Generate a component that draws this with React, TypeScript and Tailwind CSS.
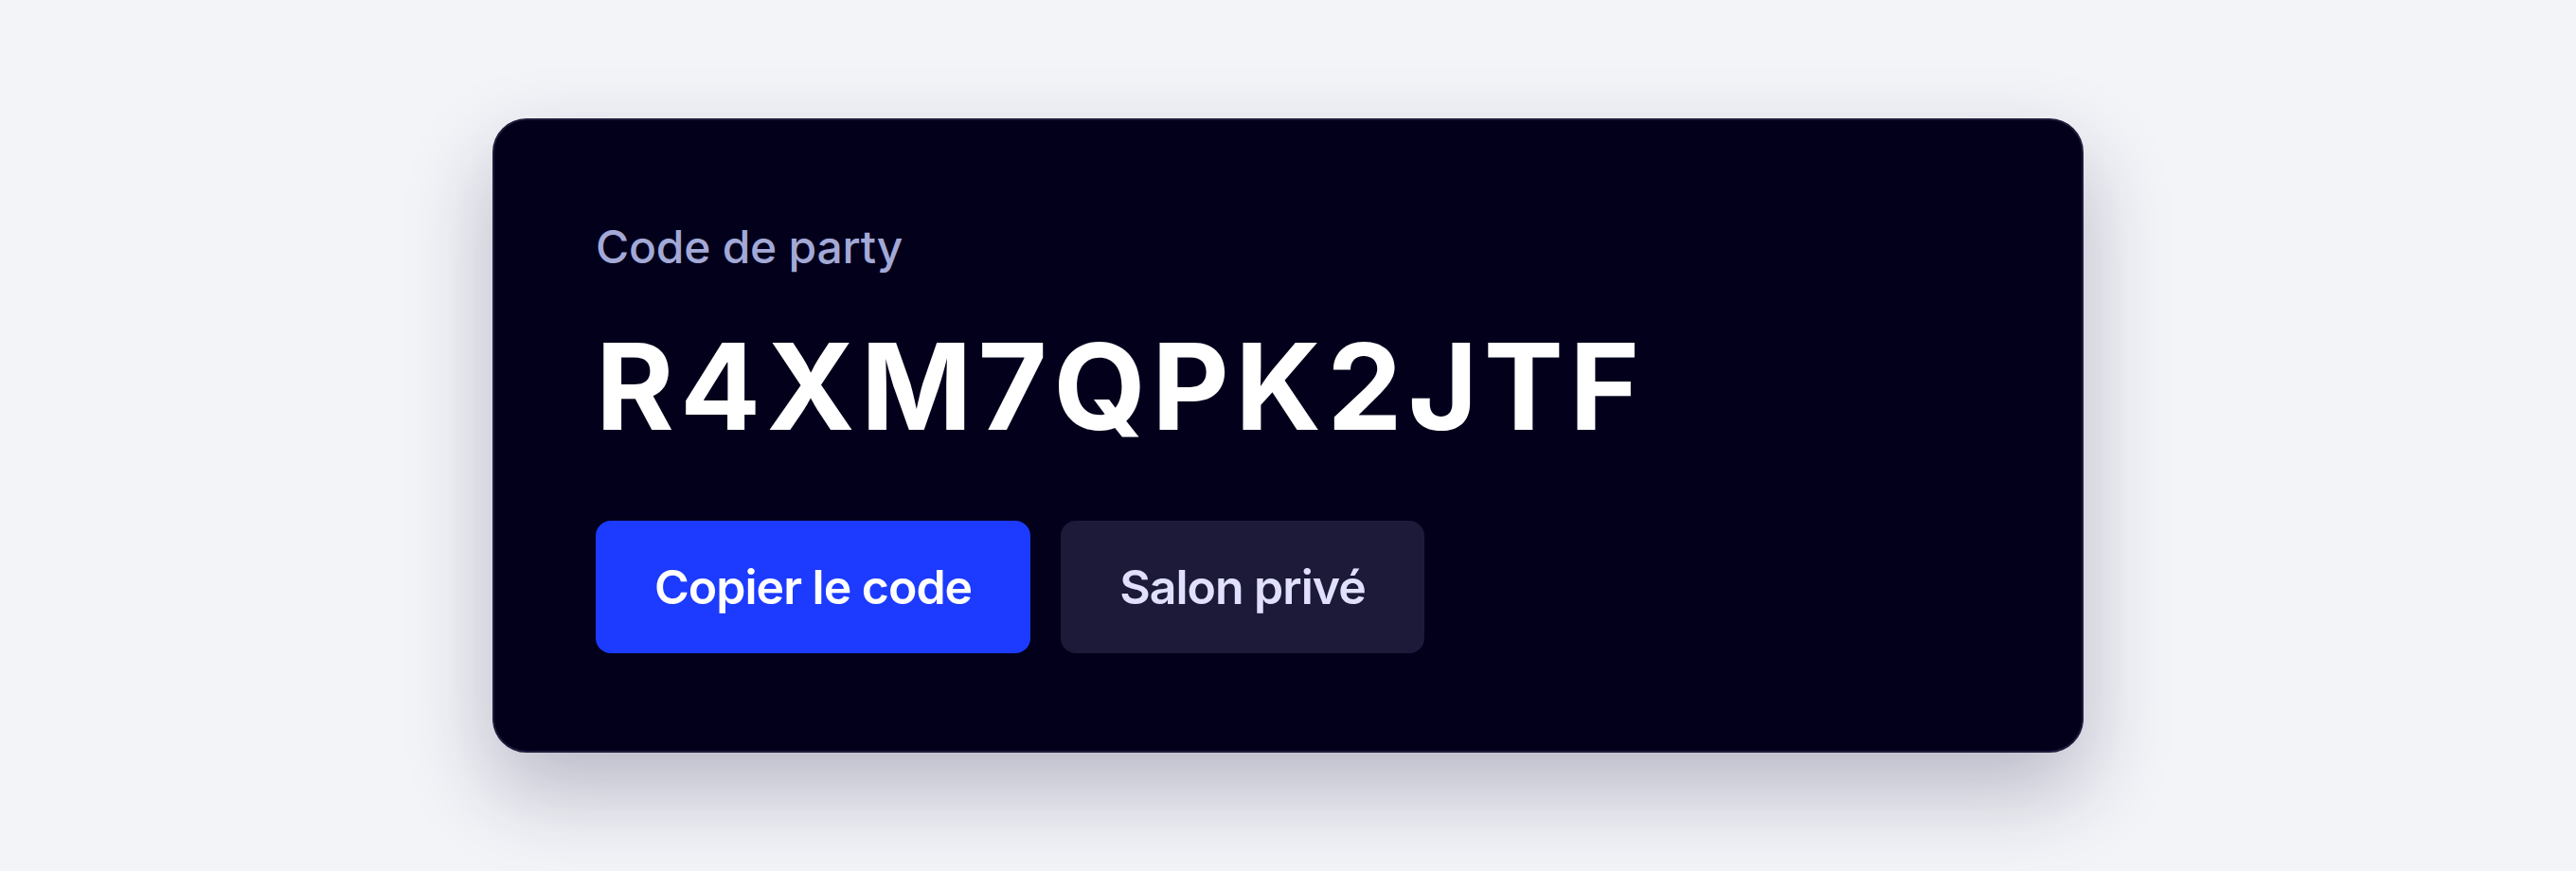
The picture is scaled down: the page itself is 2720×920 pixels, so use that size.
import React from 'react';

const PartyCodeCard: React.FC<{ code: string }> = ({ code }) => {
  return (
    <div className="w-[1680px] rounded-[36px] border-2 border-[#1e1c3a] bg-[#03001c] pt-[110px] pb-[103px] pl-[107px] pr-[107px] shadow-[0_40px_90px_rgba(30,30,70,0.28)]">
      <p className="text-[48px] leading-none font-medium tracking-[-0.005em] text-[#a3a9d6]">Code de party</p>
      <h1 className="mt-[60px] text-[126px] leading-none font-bold tracking-[0.05em] text-white">
        {code}
      </h1>
      <div className="mt-[79px] flex gap-[32px]">
        <button className="flex h-[140px] items-center rounded-[16px] bg-[#1c3bff] px-[62px] text-[50px] font-semibold tracking-[-0.02em] text-white">
          Copier le code
        </button>
        <button className="flex h-[140px] items-center rounded-[16px] bg-[#1c1a38] px-[62px] text-[50px] font-semibold tracking-[-0.02em] text-[#e0e0fc]">
          Salon privé
        </button>
      </div>
    </div>
  );
};

export default function App() {
  return (
    <div className="flex h-[920px] w-full items-center justify-center bg-[#f3f4f8] font-['Inter',sans-serif]">
      <PartyCodeCard code="R4XM7QPK2JTF" />
    </div>
  );
}
